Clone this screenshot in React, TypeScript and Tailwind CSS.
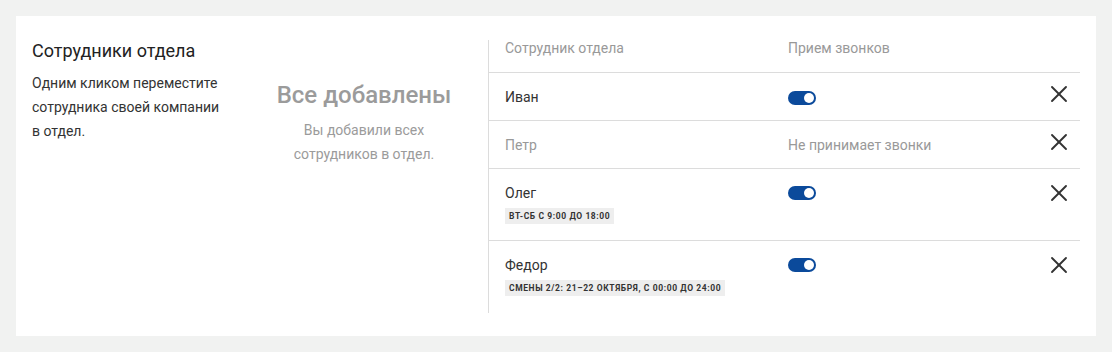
import { X } from 'lucide-react';

type Employee = {
  name: string;
  active: boolean;
  schedule?: string;
};

const employees: Employee[] = [
  { name: 'Иван', active: true },
  { name: 'Петр', active: false },
  { name: 'Олег', active: true, schedule: 'Вт-Сб с 9:00 до 18:00' },
  { name: 'Федор', active: true, schedule: 'Смены 2/2: 21–22 октября, с 00:00 до 24:00' },
];

function Toggle() {
  return (
    <div className="w-[28px] h-[14px] rounded-full bg-[#0b4a9b] flex items-center justify-end pr-[2px]">
      <div className="w-[10px] h-[10px] rounded-full bg-white" />
    </div>
  );
}

export default function App() {
  return (
    <div className="min-h-[352px] bg-[#f1f2f1] p-4 font-['Roboto',sans-serif] text-[#333]">
      <div className="bg-white flex px-4 pt-6 pb-[23px]">
        {/* Description */}
        <div className="w-[216px]">
          <h2 className="text-[18px] leading-[22px] text-[#222]">Сотрудники отдела</h2>
          <p className="mt-[9px] max-w-[196px] text-[14px] leading-[24px] text-[#333]">
            Одним кликом переместите сотрудника своей компании в отдел.
          </p>
        </div>

        {/* Empty state */}
        <div className="w-[240px] pr-2 flex flex-col items-center pt-[40px] text-center">
          <div className="text-[24px] leading-[30px] font-medium text-[#9b9b9b]">Все добавлены</div>
          <p className="mt-[8px] w-[160px] text-[14px] leading-[24px] text-[#9b9b9b]">
            Вы добавили всех сотрудников в отдел.
          </p>
        </div>

        {/* Table */}
        <div className="flex-1 border-l border-[#dcdcdc]">
          <div className="h-[33px] flex items-start border-b border-[#dcdcdc] text-[14px] leading-[16px] text-[#999]">
            <div className="w-[299px] pl-4">Сотрудник отдела</div>
            <div>Прием звонков</div>
          </div>
          {employees.map((e, i) => (
            <div
              key={e.name}
              className={
                'flex ' +
                (e.schedule ? 'h-[72px] pt-[15px] ' : 'h-[48px] items-center ') +
                (i < employees.length - 1 ? 'border-b border-[#dcdcdc]' : '')
              }
            >
              <div className="w-[299px] pl-4">
                <div className={'text-[14px] leading-[18px] ' + (e.active ? 'text-[#333]' : 'text-[#999]')}>
                  {e.name}
                </div>
                {e.schedule && (
                  <span className="inline-block mt-[6px] bg-[#eeeeee] px-[4px] py-[2px] text-[8.5px] leading-[12px] font-bold uppercase tracking-[0.07em] text-[#333]">
                    {e.schedule}
                  </span>
                )}
              </div>
              <div className="flex-1 flex items-start">
                {e.active ? (
                  <div className="mt-[2px]">
                    <Toggle />
                  </div>
                ) : (
                  <span className="text-[14px] leading-[18px] text-[#999]">Не принимает звонки</span>
                )}
              </div>
              <div className="w-[35px] flex justify-start -mt-[5px]">
                <X className="w-[28px] h-[28px] text-[#333]" strokeWidth={1.6} />
              </div>
            </div>
          ))}
        </div>
      </div>
    </div>
  );
}
